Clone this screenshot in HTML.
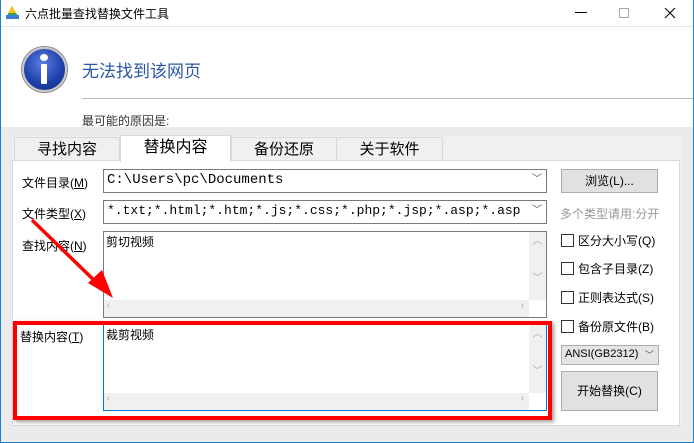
<!DOCTYPE html>
<html><head><meta charset="utf-8"><style>
*{margin:0;padding:0;box-sizing:border-box}
body{width:694px;height:443px;overflow:hidden;font-family:"Liberation Sans","Noto Sans CJK SC",sans-serif;font-size:12px;color:#000;background:#fff;position:relative}
.a{position:absolute}
.mono{font-family:"Liberation Mono","Noto Sans CJK SC",monospace}
.combo{position:absolute;background:#fff;border:1px solid #7a7a7a;height:24px;overflow:hidden;white-space:nowrap;padding:2px 0 0 3px;font-size:14px}
.dd{position:absolute;right:0;top:0;width:18px;height:22px;background:#fff;color:#555;font-size:10px;text-align:center;line-height:22px}
.btn{position:absolute;background:#e1e1e1;border:1px solid #adadad;text-align:center;font-size:12px}
.cb{position:absolute;left:561px;font-size:12px;line-height:14px}
.cb i{display:inline-block;width:13px;height:13px;border:1px solid #333;vertical-align:-2px;margin-right:4px;background:#fff}
.ta{position:absolute;background:#fff;border:1px solid #7a7a7a}
.hs{position:absolute;left:0;bottom:0;right:17px;height:17px;background:#f0f0f0;color:#aaa;font-size:10px}
.vs{position:absolute;right:0;top:0;bottom:17px;width:17px;background:#f0f0f0;color:#aaa;font-size:10px;text-align:center}
.tab{position:absolute;top:137px;height:24px;border:1px solid #d9d9d9;border-bottom:none;background:#f0f0f0;font-size:15px;text-align:center;line-height:24px}
</style></head><body>
<div class="a" style="left:0;top:0;width:694px;height:443px;border:1px solid #1883d7;border-top:none"></div>
<!-- title -->
<div class="a" style="left:5px;top:5px;width:15px;height:15px">
<svg width="15" height="15"><polygon points="7,1 14,13 1,13" fill="#3aa047"/><polygon points="7,1 11,8 3,8" fill="#f7c21c"/><rect x="1" y="10" width="13" height="4" fill="#3c7bd8"/></svg></div>
<div class="a" style="left:25px;top:5px;font-size:12px">六点批量查找替换文件工具</div>
<div class="a" style="left:575px;top:12px;width:12px;height:1px;background:#000"></div>
<div class="a" style="left:619px;top:8px;width:10px;height:10px;border:1px solid #aaa"></div>
<svg class="a" style="left:664px;top:7px" width="12" height="12"><path d="M1 1L11 11M11 1L1 11" stroke="#000" stroke-width="1"/></svg>
<div class="a" style="left:1px;top:26px;width:692px;height:1px;background:#e5e5e5"></div>
<!-- header -->
<div class="a" style="left:22px;top:47px;width:45px;height:45px;border-radius:50%;background:radial-gradient(circle at 45% 35%,#5a7ee0,#1d3ea8 60%,#142d80);border:2px solid #c8c8c8;box-shadow:0 0 0 1px #888"></div>
<div class="a" style="left:40px;top:54px;width:8px;height:7px;border-radius:50%;background:#fff"></div>
<div class="a" style="left:41px;top:64px;width:6px;height:20px;background:#fff;border-radius:1px"></div>
<div class="a" style="left:82px;top:57px;font-size:17px;color:#2a57a8">无法找到该网页</div>
<div class="a" style="left:82px;top:98px;width:611px;height:1px;background:#b5bcc4"></div>
<div class="a" style="left:82px;top:112px;font-size:12px;color:#333">最可能的原因是:</div>
<!-- gray area -->
<div class="a" style="left:1px;top:127px;width:692px;height:315px;background:#ebebeb"></div>
<div class="a" style="left:12px;top:136px;width:670px;height:290px;background:#f0f0f0"></div>
<div class="tab" style="left:14px;width:106px">寻找内容</div>
<div class="tab" style="left:231px;width:106px">备份还原</div>
<div class="tab" style="left:336px;width:107px">关于软件</div>
<div class="a" style="left:12px;top:160px;width:668px;height:266px;background:#fff;border:1px solid #d9d9d9"></div>
<div class="tab" style="left:120px;top:135px;width:111px;height:27px;background:#fff;font-size:16px">替换内容</div>
<!-- labels -->
<div class="a" style="left:22px;top:174px">文件目录(<u>M</u>)</div>
<div class="a" style="left:22px;top:205px">文件类型(<u>X</u>)</div>
<div class="a" style="left:22px;top:237px">查找内容(<u>N</u>)</div>
<div class="a" style="left:20px;top:328px">替换内容(<u>T</u>)</div>
<div class="combo mono" style="left:103px;top:169px;width:444px">C:\Users\pc\Documents<span class="dd">﹀</span></div>
<div class="combo mono" style="left:103px;top:200px;width:444px;font-size:13px">*.txt;*.html;*.htm;*.js;*.css;*.php;*.jsp;*.asp;*.asp<span class="dd">﹀</span></div>
<div class="ta" style="left:103px;top:231px;width:444px;height:87px"><div class="a" style="left:2px;top:1px">剪切视频</div><div class="vs">︿<br><br><br>﹀</div><div class="hs">&nbsp;‹<span style="position:absolute;right:5px">›</span></div></div>
<div class="ta" style="left:103px;top:324px;width:444px;height:87px;border-color:#0078d7"><div class="a" style="left:2px;top:1px">裁剪视频</div><div class="vs">︿<br><br><br>﹀</div><div class="hs">&nbsp;‹<span style="position:absolute;right:5px">›</span></div></div>
<div class="a" style="left:13px;top:321px;width:539px;height:99px;border:4px solid #f00;box-shadow:2px 2px 4px rgba(0,0,0,.4)"></div>
<!-- right -->
<div class="btn" style="left:561px;top:169px;width:97px;height:24px;line-height:22px">浏览(L)...</div>
<div class="a" style="left:560px;top:205px;color:#999">多个类型请用:分开</div>
<div class="cb" style="top:234px"><i></i>区分大小写(Q)</div>
<div class="cb" style="top:262px"><i></i>包含子目录(Z)</div>
<div class="cb" style="top:291px"><i></i>正则表达式(S)</div>
<div class="cb" style="top:320px"><i></i>备份原文件(B)</div>
<div class="a" style="left:561px;top:345px;width:98px;height:20px;border:1px solid #adadad;background:#e5e5e5;font-size:11px;padding:2px 0 0 3px">ANSI(GB2312)<span style="position:absolute;right:4px;color:#555;font-size:9px">﹀</span></div>
<div class="btn" style="left:561px;top:371px;width:97px;height:40px;line-height:38px">开始替换(C)</div>
<!-- arrow -->
<svg class="a" style="left:0;top:0" width="694" height="443"><line x1="32" y1="220" x2="100" y2="286" stroke="#f00" stroke-width="3.5"/><polygon points="113,298 88,283 102,270" fill="#f00"/></svg>
</body></html>
